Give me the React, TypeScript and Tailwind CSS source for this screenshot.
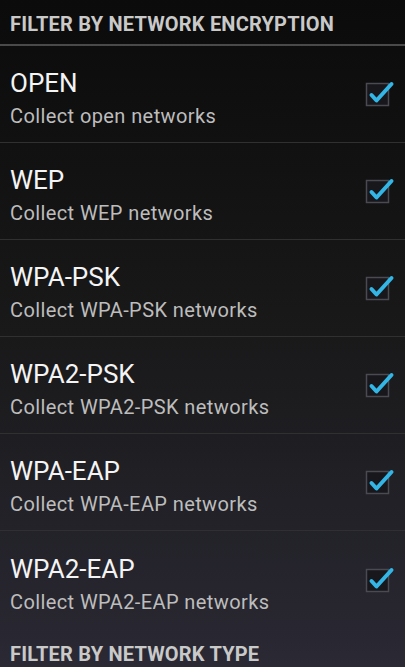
import React from "react";

const items = [
  { title: "OPEN", sub: "Collect open networks" },
  { title: "WEP", sub: "Collect WEP networks" },
  { title: "WPA-PSK", sub: "Collect WPA-PSK networks" },
  { title: "WPA2-PSK", sub: "Collect WPA2-PSK networks" },
  { title: "WPA-EAP", sub: "Collect WPA-EAP networks" },
  { title: "WPA2-EAP", sub: "Collect WPA2-EAP networks" },
];

const Check = () => (
  <svg width="32" height="32" viewBox="0 0 32 32" className="shrink-0">
    <rect x="3.5" y="5.5" width="22" height="22" fill="#17171c" stroke="#4a4a52" strokeWidth="1.5" />
    <polyline
      points="8.5,17 13.5,22.5 28.5,6"
      fill="none"
      stroke="#33b5e5"
      strokeWidth="4"
      strokeLinecap="round"
      strokeLinejoin="round"
    />
  </svg>
);

const Header = ({ label }: { label: string }) => (
  <div className="h-[46px] border-b-2 border-[#4a4a4a] px-[10px] pt-[12px]">
    <div className="text-[20px] leading-[24px] font-bold text-[#c9c9c9] tracking-[0.2px]">{label}</div>
  </div>
);

export default function App() {
  return (
    <div
      className="w-[405px] h-[667px] overflow-hidden bg-gradient-to-b from-[#0b0b0b] via-[#19191a] to-[#2a2934]"
      style={{ fontFamily: "Roboto, 'Liberation Sans', sans-serif" }}
    >
      <Header label="FILTER BY NETWORK ENCRYPTION" />
      {items.map((it, i) => (
        <div
          key={it.title}
          className={
            i < items.length - 1
              ? "h-[97px] flex items-center border-b border-[#303030] pl-[10px] pr-[10px]"
              : "h-[97px] flex items-center pl-[10px] pr-[10px]"
          }
        >
          <div className="flex-1 min-w-0 pt-[8px]">
            <div className="text-[26px] leading-[30px] text-[#f4f4f4]">{it.title}</div>
            <div className="mt-[6px] text-[20px] leading-[24px] text-[#bdbdbd] tracking-[0.4px]">{it.sub}</div>
          </div>
          <Check />
        </div>
      ))}
      <div className="px-[10px] pt-[14px]">
        <div className="text-[20px] leading-[24px] font-bold text-[#c9c9c9] tracking-[0.2px]">FILTER BY NETWORK TYPE</div>
      </div>
    </div>
  );
}
